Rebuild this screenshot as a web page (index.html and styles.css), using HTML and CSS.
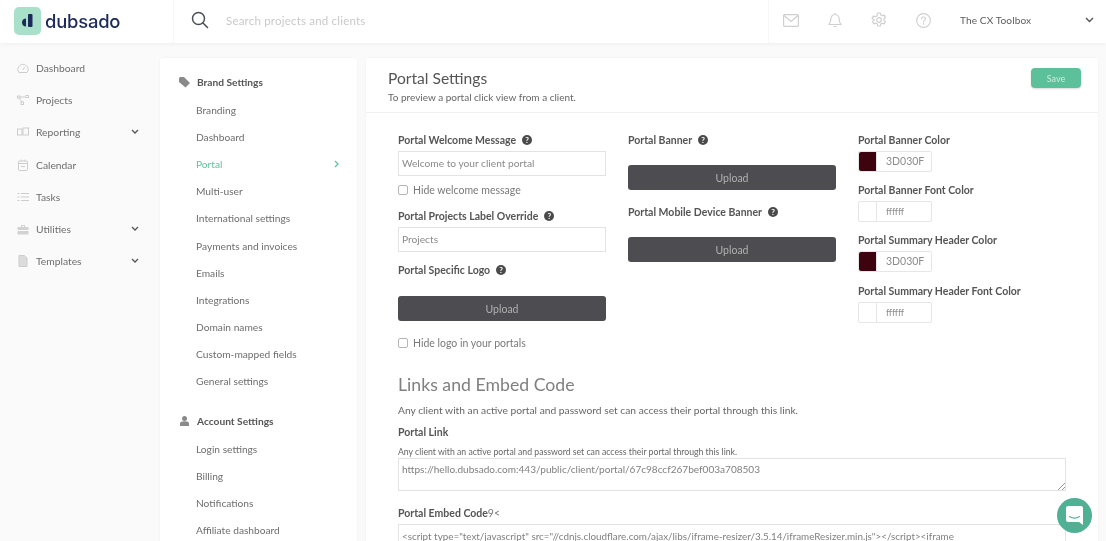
FILE: index.html
```html
<!DOCTYPE html>
<html lang="en">
<head>
<meta charset="utf-8">
<title>Portal Settings</title>
<link rel="stylesheet" href="styles.css">
</head>
<body>
<div class="app">
  <header class="topbar">
    <div class="brand">
      <span class="logo-mark"><svg width="14" height="16" viewBox="0 0 14 16"><path d="M5 5.500v8C2.800 13.500 1 12 1 9.500S2.800 5.500 5 5.500z" fill="#1c2b59"/><rect x="7" y="1" width="4.500" height="13" rx="1" fill="#1c2b59"/></svg></span>
      <span class="logo-text">dubsado</span>
    </div>
    <div class="search">
      <svg class="search-icon" width="18" height="18" viewBox="0 0 18 18" fill="none" stroke="#4a4f57" stroke-width="1.500"><circle cx="7.500" cy="7.500" r="6"/><path d="M12 12l4.500 4.500" stroke-linecap="round"/></svg>
      <span class="search-text">Search projects and clients</span>
    </div>
    <div class="top-actions">
      <svg width="16" height="13" viewBox="0 0 16 13" fill="none" stroke="#cfcfcf" stroke-width="1.200"><rect x=".6" y=".6" width="14.800" height="11.800" rx="1"/><path d="M1 1.500l7 6 7-6"/></svg>
      <svg width="14" height="16" viewBox="0 0 14 16" fill="none" stroke="#cfcfcf" stroke-width="1.200"><path d="M1 12.500h12c-1.500-1.500-1.800-3-1.800-5.500C11.200 4.500 9.500 2.500 7 2.500S2.800 4.500 2.800 7c0 2.500-.3 4-1.800 5.500zM7 1v1.500M5.500 14.500h3" stroke-linejoin="round"/></svg>
      <svg width="16" height="16" viewBox="0 0 16 16" fill="none" stroke="#cfcfcf" stroke-width="1.200"><path d="M6.700 1h2.600l.4 2 1.500.8 1.900-.7 1.300 2.300-1.500 1.300v1.600l1.500 1.300-1.300 2.300-1.900-.7-1.500.8-.4 2H6.700l-.4-2-1.500-.8-1.900.7-1.300-2.300 1.500-1.300V7.700L1.100 6.400l1.300-2.300 1.900.7 1.500-.8z" stroke-linejoin="round"/><circle cx="8" cy="8" r="2.300"/></svg>
      <svg width="15" height="15" viewBox="0 0 16 16" fill="none" stroke="#cfcfcf" stroke-width="1.200"><circle cx="8" cy="8" r="7.300"/><path d="M5.900 6.200C6 5 6.900 4.300 8 4.300c1.200 0 2.100.8 2.100 1.900 0 1.600-2.100 1.700-2.100 3.200M8 11v1" stroke-linecap="round"/></svg>
      <span class="account">The CX Toolbox</span>
      <svg class="account-chev" width="9" height="6" viewBox="0 0 9 6" fill="none" stroke="#555" stroke-width="1.400"><path d="M1 1l3.500 3.500L8 1"/></svg>
    </div>
  </header>

  <div class="workspace">
    <nav class="sidenav">
      <a class="nav-item"><svg width="12" height="10" viewBox="0 0 12 10" fill="none" stroke="#cdcdcd"><path d="M2 9.500a5 5 0 1 1 8 0zM6 7l1.500-3"/></svg><span>Dashboard</span></a>
      <a class="nav-item"><svg width="12" height="10" viewBox="0 0 12 10" fill="none" stroke="#cdcdcd"><rect x=".5" y="1" width="2.500" height="2"/><rect x="9" y=".5" width="2.500" height="2"/><rect x="4" y="7" width="2.500" height="2.500"/><path d="M3 2h6M2 3l3 4"/></svg><span>Projects</span></a>
      <a class="nav-item"><svg width="12" height="10" viewBox="0 0 12 10" fill="none" stroke="#cdcdcd"><rect x=".5" y="2" width="4.500" height="6"/><rect x="6" y="1" width="5.500" height="7"/></svg><span>Reporting</span><svg class="nav-chev" width="8" height="6" viewBox="0 0 8 6" fill="none" stroke="#555" stroke-width="1.300"><path d="M1 1l3 3 3-3"/></svg></a>
      <a class="nav-item"><svg width="12" height="12" viewBox="0 0 12 12" fill="none" stroke="#cdcdcd"><rect x="1.500" y="2" width="9" height="9.500" rx="1"/><path d="M1.500 4.500h9M4 .5v2M8 .5v2M4 7.500h4"/></svg><span>Calendar</span></a>
      <a class="nav-item"><svg width="12" height="10" viewBox="0 0 12 10" fill="none" stroke="#cdcdcd"><path d="M4 1.500h8M4 5h8M4 8.500h8M.5 1.500h2M.5 5h2M.5 8.500h2"/></svg><span>Tasks</span></a>
      <a class="nav-item"><svg width="12" height="11" viewBox="0 0 12 11" fill="#d2d2d2"><path d="M4 3V1h4v2h3.500v3H.5V3zM5 2v1h2V2zM.5 7h11v3.500H.5z"/></svg><span>Utilities</span><svg class="nav-chev" width="8" height="6" viewBox="0 0 8 6" fill="none" stroke="#555" stroke-width="1.300"><path d="M1 1l3 3 3-3"/></svg></a>
      <a class="nav-item"><svg width="12" height="12" viewBox="0 0 12 12" fill="#dcdcdc" stroke="#cdcdcd"><path d="M2 .5h5.500L10 3v8.500H2z"/></svg><span>Templates</span><svg class="nav-chev" width="8" height="6" viewBox="0 0 8 6" fill="none" stroke="#555" stroke-width="1.300"><path d="M1 1l3 3 3-3"/></svg></a>
    </nav>

    <aside class="settings-menu">
      <div class="menu-head"><svg width="11" height="11" viewBox="0 0 11 11" fill="#8a8a8a"><path d="M0 1.500A1.500 1.500 0 0 1 1.500 0H5l6 6-4.500 4.500L0 5z"/></svg><span>Brand Settings</span></div>
      <a class="menu-link">Branding</a>
      <a class="menu-link">Dashboard</a>
      <a class="menu-link is-active">Portal<svg width="5" height="8" viewBox="0 0 5 8" fill="none" stroke="#5fc3a0" stroke-width="1.300"><path d="M1 1l3 3-3 3"/></svg></a>
      <a class="menu-link">Multi-user</a>
      <a class="menu-link">International settings</a>
      <a class="menu-link">Payments and invoices</a>
      <a class="menu-link">Emails</a>
      <a class="menu-link">Integrations</a>
      <a class="menu-link">Domain names</a>
      <a class="menu-link">Custom-mapped fields</a>
      <a class="menu-link">General settings</a>
      <div class="menu-head menu-head-second"><svg width="9" height="10" viewBox="0 0 9 10" fill="#8a8a8a"><circle cx="4.500" cy="2.500" r="2.500"/><path d="M0 10V7.500C0 6 1.500 5.200 4.500 5.200S9 6 9 7.500V10z"/></svg><span>Account Settings</span></div>
      <a class="menu-link">Login settings</a>
      <a class="menu-link">Billing</a>
      <a class="menu-link">Notifications</a>
      <a class="menu-link">Affiliate dashboard</a>
    </aside>

    <main class="card">
      <div class="card-head">
        <div>
          <h1>Portal Settings</h1>
          <p>To preview a portal click view from a client.</p>
        </div>
        <button class="save">Save</button>
      </div>
      <div class="card-body">
        <div class="form-grid">
          <div class="col">
            <label class="field-label">Portal Welcome Message<i class="help">?</i></label>
            <div class="input">Welcome to your client portal</div>
            <div class="check check-first"><span class="box"></span>Hide welcome message</div>
            <label class="field-label label-projects">Portal Projects Label Override<i class="help">?</i></label>
            <div class="input">Projects</div>
            <label class="field-label label-logo">Portal Specific Logo<i class="help">?</i></label>
            <button class="upload upload-logo">Upload</button>
            <div class="check check-logo"><span class="box"></span>Hide logo in your portals</div>
          </div>
          <div class="col">
            <label class="field-label">Portal Banner<i class="help">?</i></label>
            <button class="upload upload-banner">Upload</button>
            <label class="field-label label-mobile">Portal Mobile Device Banner<i class="help">?</i></label>
            <button class="upload upload-banner">Upload</button>
          </div>
          <div class="col">
            <label class="field-label">Portal Banner Color</label>
            <div class="color"><span class="swatch swatch-dark"></span><span class="hex">3D030F</span></div>
            <label class="field-label label-color">Portal Banner Font Color</label>
            <div class="color"><span class="swatch"></span><span class="hex hex-small">ffffff</span></div>
            <label class="field-label label-color">Portal Summary Header Color</label>
            <div class="color"><span class="swatch swatch-dark"></span><span class="hex">3D030F</span></div>
            <label class="field-label label-color label-color-last">Portal Summary Header Font Color</label>
            <div class="color"><span class="swatch"></span><span class="hex hex-small">ffffff</span></div>
          </div>
        </div>
        <h2>Links and Embed Code</h2>
        <p class="links-intro">Any client with an active portal and password set can access their portal through this link.</p>
        <label class="field-label label-link">Portal Link</label>
        <p class="hint">Any client with an active portal and password set can access their portal through this link.</p>
        <div class="area area-link">https://hello.dubsado.com:443/public/client/portal/67c98ccf267bef003a708503<svg class="grip" width="8" height="8" viewBox="0 0 8 8" stroke="#999" fill="none"><path d="M1 8l7-7M5 8l3-3"/></svg></div>
        <label class="field-label label-embed">Portal Embed Code<span class="embed-glyph">9&lt;</span></label>
        <div class="area area-embed">&lt;script type="text/javascript" src="//cdnjs.cloudflare.com/ajax/libs/iframe-resizer/3.5.14/iframeResizer.min.js"&gt;&lt;/script&gt;&lt;iframe</div>
      </div>
    </main>
  </div>
</div>
<button class="chat" aria-label="Chat"><svg width="17" height="19" viewBox="0 0 17 19"><path d="M2 0h13a2 2 0 0 1 2 2v17l-4-3H2a2 2 0 0 1-2-2V2a2 2 0 0 1 2-2z" fill="#fff"/><path d="M3.500 10.500c3 2 7 2 10 0" fill="none" stroke="#4fb094" stroke-width="1.100" stroke-linecap="round"/></svg></button>
</body>
</html>
```
FILE: styles.css
```css
* { box-sizing: border-box; }
html, body { margin: 0; height: 100%; overflow: hidden; }
body {
  background: #fafafa;
  font-family: "Lato", "Liberation Sans", sans-serif;
  font-size: 10.300px;
  color: #6b6b6b;
  filter: blur(0.4px);
}
.app { height: 541px; display: flex; flex-direction: column; overflow: hidden; }

.topbar {
  flex: none; height: 43px; background: #fff; display: flex; align-items: center;
  box-shadow: 0 1px 4px rgba(0, 0, 0, .05); position: relative;
}
.brand { width: 174px; height: 43px; padding: 0 0 2px 14px; display: flex; align-items: center; gap: 4px; border-right: 1px solid #f7f7f7; }
.logo-mark { width: 27px; height: 28px; border-radius: 5px; background: #a9e0ca; display: flex; align-items: center; justify-content: center; }
.logo-text { font-size: 18.400px; font-weight: 500; color: #1c2b59; font-family: "Inter", sans-serif; letter-spacing: -.2px; }
.search { flex: 1; display: flex; align-items: center; padding: 0 0 3px 17px; }
.search-icon { margin-right: 17px; }
.search-text { font-size: 11.500px; color: #c9c9c9; letter-spacing: .2px; }
.top-actions { width: 338px; height: 43px; padding: 0 0 3px 14px; border-left: 1px solid #f7f7f7; display: flex; align-items: center; gap: 29px; }
.account { font-size: 10.100px; color: #5c5c5c; letter-spacing: .1px; width: 96px; }

.workspace { flex: 1; display: flex; align-items: flex-start; padding-top: 9px; min-height: 0; }
.sidenav { width: 160px; flex: none; }
.nav-item { height: 32.200px; padding-left: 17px; display: flex; align-items: center; gap: 7px; color: #6e6e6e; }
.nav-item > svg:first-child { width: 12px; flex: none; }
.nav-chev { margin-left: auto; margin-right: 21px; }

.settings-menu {
  width: 197px; flex: none; margin-top: 6px; background: #fff; border-radius: 3px; padding: 12px 18px 0 18px; height: 500px;
  box-shadow: 0 0 3px rgba(0, 0, 0, .05);
}
.menu-head { height: 24px; display: flex; align-items: center; gap: 7px; font-weight: 700; font-size: 10.200px; color: #555; margin-bottom: 2.500px; padding-left: 1px; }
.menu-head svg { width: 11px; flex: none; }
.menu-head-second { margin-top: 14.500px; margin-bottom: 2px; }
.menu-link { height: 27.100px; display: flex; align-items: center; justify-content: space-between; padding-left: 18px; color: #6e6e6e; font-size: 10.200px; }
.is-active { color: #5fc3a0; }

.card {
  width: 732px; flex: none; margin: 6px 0 0 9px; background: #fff; border-radius: 3px; height: 500px;
  box-shadow: 0 0 3px rgba(0, 0, 0, .05); overflow: hidden;
}
.card-head { height: 55px; padding: 10px 17px 0 22px; display: flex; justify-content: space-between; align-items: flex-start; border-bottom: 1px solid #f1f1f1; }
h1 { margin: 0; font-size: 15.600px; font-weight: 400; color: #555; line-height: 20px; }
.card-head p { margin: 2px 0 0; font-size: 10px; line-height: 14px; color: #666; }
.save { width: 50px; height: 20px; border: 0; border-radius: 4px; background: #5cc09a; color: #c9eede; font: 9px "Lato", sans-serif; box-shadow: 0 1px 2px rgba(0, 0, 0, .15); }

.card-body { padding: 20px 32px 0; }
.form-grid { display: grid; grid-template-columns: 208px 208px 208px; column-gap: 22px; }
.col { display: flex; flex-direction: column; align-items: flex-start; }
.field-label { display: flex; align-items: center; gap: 6px; height: 13px; font-size: 10.500px; font-weight: 700; color: #555; white-space: pre; }
.help { width: 10px; height: 10px; border-radius: 50%; background: #4a4a4a; color: #fff; font: 700 8px/10px "Lato", sans-serif; text-align: center; }
.input { width: 208px; height: 25px; margin-top: 5px; border: 1px solid #e3e3e3; padding: 0 3px; line-height: 23px; font-size: 10.200px; color: #8a8a8a; }
.check { display: flex; align-items: center; gap: 5px; font-size: 10.500px; color: #7a7a7a; height: 14px; }
.check-first { margin-top: 7px; }
.check-logo { margin-top: 15px; }
.box { width: 10px; height: 10px; border: 1px solid #b5b5b5; border-radius: 2px; }
.label-projects { margin-top: 12px; }
.label-logo { margin-top: 11px; }
.upload { width: 208px; height: 25px; border: 0; border-radius: 3px; background: #4d4c50; color: #b0b0b0; font: 10.500px "Lato", sans-serif; }
.upload-logo { margin-top: 20px; }
.upload-banner { margin-top: 19px; }
.label-mobile { margin-top: 15px; }
.color { display: flex; width: 74px; height: 21px; margin-top: 5px; border: 1px solid #e6e6e6; border-radius: 2px; }
.swatch { width: 18px; flex: none; border-right: 1px solid #e6e6e6; }
.swatch-dark { background: #3d030f; border-radius: 2px 0 0 2px; }
.hex { padding-left: 9px; font-size: 10.500px; line-height: 19px; color: #8c8c8c; }
.hex-small { font-size: 9px; }
.label-color { margin-top: 11px; }
.label-color-last { margin-top: 12px; }

h2 { margin: 24px 0 0; font-size: 17.700px; line-height: 22px; font-weight: 400; color: #808080; }
.links-intro { margin: 7px 0 0; font-size: 10.250px; line-height: 14px; color: #666; }
.label-link { margin-top: 8px; }
.hint { margin: 8px 0 0; font-size: 8.700px; line-height: 11px; color: #666; }
.area { width: 668px; border: 1px solid #e3e3e3; padding: 3px; font-size: 10px; line-height: 14px; color: #808080; white-space: nowrap; overflow: hidden; position: relative; }
.area-link { height: 33px; margin-top: 1px; font-size: 10.050px; }
.label-embed { margin-top: 15px; gap: 0; }
.embed-glyph { font-weight: 400; color: #777; }
.area-embed { height: 40px; margin-top: 5px; padding-top: 4px; font-size: 9.860px; }
.grip { position: absolute; right: 0; bottom: 0; }

.chat { position: fixed; left: 1057px; top: 498px; width: 35px; height: 35px; border: 0; padding: 0; border-radius: 50%; background: #4fb094; display: flex; align-items: center; justify-content: center; }
```
